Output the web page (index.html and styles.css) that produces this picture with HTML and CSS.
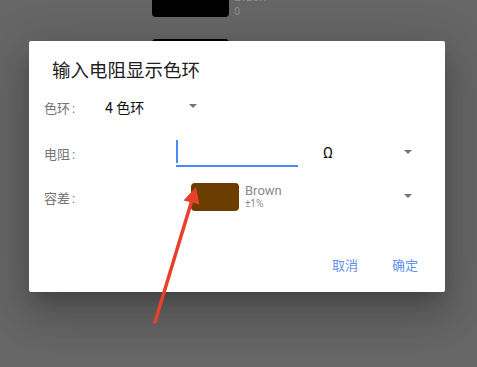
FILE: index.html
```html
<!DOCTYPE html>
<html lang="zh">
<head>
<meta charset="utf-8">
<link rel="stylesheet" href="styles.css">
</head>
<body>
<div class="list">
  <div class="item">
    <div class="swatch black"></div>
    <div class="info"><div class="name">Black</div><div class="val">0</div></div>
  </div>
  <div class="item">
    <div class="swatch black"></div>
    <div class="info"><div class="name">Black</div><div class="val">1</div></div>
  </div>
</div>

<div class="dialog">
  <div class="title">输入电阻显示色环</div>
  <div class="row row1">
    <div class="label l1">色环<span class="colon">:</span></div>
    <div class="value">4 色环</div>
    <div class="tri"></div>
  </div>
  <div class="row row2">
    <div class="label l2">电阻<span class="colon">:</span></div>
    <div class="input"><div class="cursor"></div></div>
    <div class="ohm">Ω</div>
    <div class="spacer"></div>
    <div class="tri tri-r"></div>
  </div>
  <div class="row row3">
    <div class="label l3">容差<span class="colon">:</span></div>
    <div class="swatch brown"></div>
    <div class="info2"><div class="bname">Brown</div><div class="bval">±1%</div></div>
    <div class="spacer"></div>
    <div class="tri tri-r"></div>
  </div>
  <div class="actions">
    <span class="btn">取消</span>
    <span class="btn">确定</span>
  </div>
</div>

<svg class="arrow" width="477" height="367" viewBox="0 0 477 367">
  <line x1="155" y1="322" x2="192" y2="200" stroke="#e8412a" stroke-width="3.5" stroke-linecap="round"/>
  <polygon points="196,187 199.5,204.5 183.5,200.5" fill="#e8412a"/>
</svg>
</body>
</html>
```

FILE: styles.css
```css
html, body {
  margin: 0;
  padding: 0;
}
body {
  width: 477px;
  height: 367px;
  overflow: hidden;
  background: #666666;
  font-family: Roboto, "Noto Sans CJK SC", sans-serif;
  position: relative;
}
.list {
  margin-top: -11px;
  padding-left: 152px;
}
.item {
  display: flex;
  align-items: flex-start;
  margin-bottom: 20px;
}
.swatch {
  width: 77px;
  height: 28px;
  border-radius: 4px;
}
.swatch.black {
  background: #000;
}
.info {
  margin-left: 5px;
  color: #8c8c8c;
}
.name {
  font-size: 13px;
  line-height: 16px;
}
.val {
  font-size: 11px;
  line-height: 14px;
}
.dialog {
  position: absolute;
  left: 29px;
  top: 41px;
  width: 416px;
  height: 251px;
  box-sizing: border-box;
  background: #fff;
  border-radius: 2px;
  box-shadow: 0 11px 15px -7px rgba(0,0,0,.2), 0 24px 38px 3px rgba(0,0,0,.14), 0 9px 46px 8px rgba(0,0,0,.12);
  padding: 18px 0 14px 15px;
  display: flex;
  flex-direction: column;
}
.title {
  font-size: 18.5px;
  line-height: 24px;
  color: #212121;
  padding-left: 8px;
}
.row {
  display: flex;
  align-items: center;
  height: 28px;
}
.row1 { margin-top: 10px; }
.row2 { margin-top: 18px; }
.row3 { margin-top: 16px; }
.label {
  font-size: 13px;
  color: #757575;
  flex: none;
}
.colon {
  margin-left: 2px;
}
.l1 { width: 61px; }
.l2 { width: 132px; }
.l3 { width: 147px; }
.value {
  font-size: 14px;
  color: #111;
  width: 84px;
}
.tri {
  width: 0;
  height: 0;
  border-left: 4px solid transparent;
  border-right: 4px solid transparent;
  border-top: 4px solid #757575;
  margin-top: -2px;
}
.tri-r {
  margin-right: 33px;
}
.spacer { flex: 1; }
.input {
  width: 122px;
  height: 28px;
  box-sizing: border-box;
  border-bottom: 2px solid #4a8af4;
  flex: none;
}
.cursor {
  width: 2px;
  height: 23px;
  margin-top: 1px;
  background: #4a8af4;
}
.ohm {
  margin-left: 25px;
  font-size: 15px;
  color: #111;
}
.swatch.brown {
  width: 48px;
  height: 28px;
  background: #6b3e00;
  border-radius: 4px;
  flex: none;
}
.info2 {
  margin-left: 6px;
  align-self: stretch;
  color: #8a8a8a;
}
.bname {
  font-size: 13px;
  line-height: 15px;
}
.bval {
  font-size: 10px;
  line-height: 12px;
}
.actions {
  margin-top: auto;
  height: 28px;
  display: flex;
  align-items: center;
  justify-content: flex-end;
  padding-right: 27px;
}
.btn {
  font-size: 13px;
  color: #5e92f0;
  margin-left: 34px;
}
.arrow {
  position: absolute;
  left: 0;
  top: 0;
  pointer-events: none;
}
```
